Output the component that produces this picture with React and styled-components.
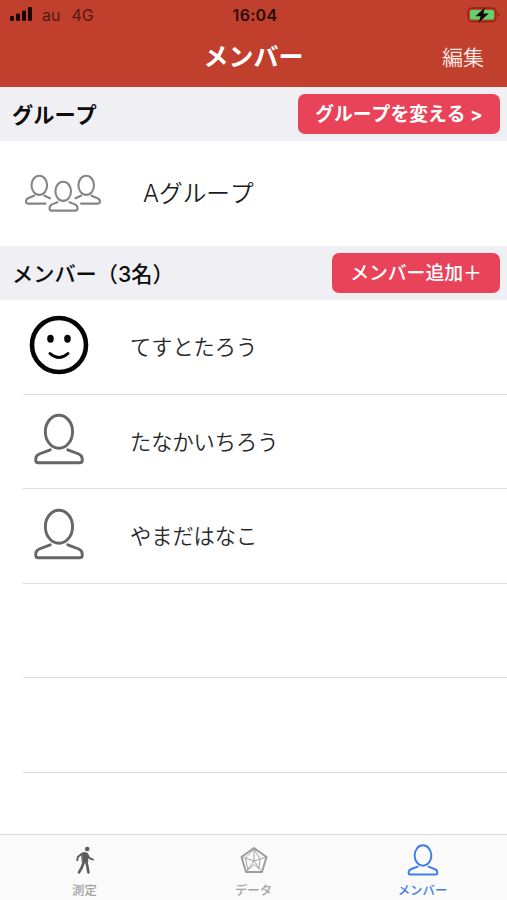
import React from 'react';
import styled, { createGlobalStyle } from 'styled-components';

const GlobalStyle = createGlobalStyle`
  * { box-sizing: border-box; }
  body {
    margin: 0;
    background: #fff;
    font-family: Inter, "Noto Sans CJK JP", sans-serif;
    font-kerning: none;
  }
  button { font: inherit; border: 0; background: none; padding: 0; }
  svg { display: block; flex: none; }
`;

const Screen = styled.div`
  width: 507px;
  height: 900px;
  display: flex;
  flex-direction: column;
  overflow: hidden;
  background: #fff;
`;

const Header = styled.header`
  height: 87px;
  flex: none;
  background: #c1402d;
`;

const StatusBar = styled.div`
  height: 30px;
  display: grid;
  grid-template-columns: 1fr auto 1fr;
  align-items: center;
  padding: 0 7px 0 10px;
  color: #2a0d08;
  font-size: 16px;
  line-height: 30px;
`;

const Carrier = styled.div`
  display: flex;
  align-items: center;
  color: #521a11;
  svg { margin-bottom: 2px; }
  span { margin-left: 9px; }
  span + span { margin-left: 11px; }
`;

const Clock = styled.div`
  font-weight: 600;
  font-size: 16px;
  letter-spacing: 0.3px;
`;

const Battery = styled.div`
  justify-self: end;
  padding-bottom: 1px;
`;

const NavBar = styled.div`
  height: 53px;
  display: grid;
  grid-template-columns: 1fr auto 1fr;
  align-items: center;
  padding: 0 23px;
  color: #fff;
`;

const NavTitle = styled.h1`
  grid-column: 2;
  margin: 0;
  font-size: 25px;
  line-height: 36px;
  font-weight: 700;
`;

const EditButton = styled.button`
  justify-self: end;
  color: #fde9e5;
  font-size: 21px;
  line-height: 32px;
  font-weight: 350;
  padding-top: 3px;
`;

const SectionHeader = styled.div`
  height: ${(p) => p.$height}px;
  flex: none;
  display: flex;
  align-items: center;
  justify-content: space-between;
  padding: 0 7px 0 12px;
  background: #f0eff4;
`;

const SectionTitle = styled.h2`
  margin: 0;
  padding-top: 1px;
  color: #0c0c0d;
  font-size: 21.2px;
  line-height: 32px;
  font-weight: ${(p) => p.$weight};
  white-space: nowrap;
`;

const ActionButton = styled.button`
  width: ${(p) => p.$width}px;
  height: 40px;
  padding-top: 2px;
  border-radius: 7px;
  background: #e9435a;
  color: #fff;
  font-size: 18.8px;
  line-height: 38px;
  font-weight: ${(p) => p.$weight};
  white-space: nowrap;
`;

const GroupRow = styled.div`
  height: 105px;
  flex: none;
  display: flex;
  align-items: center;
  padding-left: 24px;
  gap: 41px;
  color: #1c1c1e;
  font-size: 23.7px;
  line-height: 36px;
  font-weight: 350;
  svg { margin-bottom: 2px; }
  span { padding-top: 1px; }
`;

const MemberList = styled.ul`
  flex: 1;
  margin: 0;
  padding: 0 0 0 23px;
  list-style: none;
`;

const MemberRow = styled.li`
  height: 94.5px;
  display: flex;
  align-items: center;
  border-bottom: 1px solid #dcdcde;
  color: #28282a;
  font-size: 21.2px;
  line-height: 32px;
  font-weight: 350;
  span { padding-top: 1px; }
`;

const Avatar = styled.div`
  width: 72px;
  height: 60px;
  flex: none;
  display: flex;
  align-items: center;
  justify-content: center;
  margin: 0 35px 4px 0;
`;

const TabBar = styled.nav`
  height: 66px;
  flex: none;
  display: grid;
  grid-template-columns: repeat(3, 1fr);
  border-top: 1px solid #dcdcdc;
  background: #fafafa;
`;

const Tab = styled.button`
  display: flex;
  flex-direction: column;
  align-items: center;
  padding-top: 8px;
  color: ${(p) => (p.$active ? '#3d7fe6' : '#a3a3a3')};
  font-size: 12.4px;
  line-height: 18px;
  font-weight: 500;
`;

const TabIcon = styled.div`
  height: 34px;
  display: flex;
  align-items: center;
  justify-content: center;
  margin-bottom: 5px;
`;

const SignalIcon = () => (
  <svg width="23" height="16" viewBox="0 0 23 16" fill="#1a0603">
    <rect x="0" y="10" width="4" height="5" rx="1.2" />
    <rect x="6" y="7.5" width="4" height="7.5" rx="1.2" />
    <rect x="12" y="4.5" width="4" height="10.5" rx="1.2" />
    <rect x="18" y="1" width="4" height="14" rx="1.2" />
  </svg>
);

const BatteryIcon = () => (
  <svg width="33" height="18" viewBox="0 0 33 18">
    <rect x="1" y="2" width="28" height="13.5" rx="4" fill="none" stroke="#8c2416" strokeWidth="1.4" />
    <rect x="3" y="4" width="24" height="9.5" rx="1.6" fill="#62d06b" />
    <path d="M31 6.8v4q1.6-.6 1.6-2t-1.6-2Z" fill="#8c2416" />
    <path d="M17.8 1.5 8.5 10.2h5.2L11.6 16.8 21.8 7.6h-5.4Z" fill="#120503" />
  </svg>
);

const PersonIcon = ({ size = 52, color = '#666', stroke = 2.9 }) => (
  <svg width={size} height={size} viewBox="0 0 50.5 52" fill="none" stroke={color} strokeWidth={stroke} strokeLinecap="round" strokeLinejoin="round">
    <ellipse cx="25.2" cy="18.7" rx="13.6" ry="16.5" />
    <path d="M16.5 36.8 5.5 41Q2 42.6 2 46v1.2q0 2.5 2.5 2.5h41.5q2.5 0 2.5-2.5V46q0-3.4-3.5-5L34 36.8" />
  </svg>
);

const GroupIcon = () => (
  <svg width="78" height="40" viewBox="0 0 78 40" fill="none" stroke="#858585" strokeWidth="2.1" strokeLinecap="round" strokeLinejoin="round">
    <ellipse cx="15.3" cy="12.3" rx="7.8" ry="9.6" />
    <ellipse cx="39.2" cy="18.3" rx="7.8" ry="9.6" />
    <ellipse cx="62.2" cy="12.3" rx="7.8" ry="9.6" />
    <path d="M10 22.7 4.5 25Q2 26.2 2 28.6q0 2 2 2h17.5M20.5 22.7l5.5 2.6" />
    <path d="M33.5 29.2 28 31.4q-2.5 1.2-2.5 3.8 0 2.4 2 2.4h24q2 0 2-2.4 0-2.6-2.5-3.8l-5.5-2.2" />
    <path d="M57 22.7l-5.5 2.6M67.5 22.7 73.5 25.2Q76 26.3 76 28.6q0 2-2 2H57" />
  </svg>
);

const SmileIcon = () => (
  <svg width="60" height="60" viewBox="0 0 60 60" fill="none">
    <circle cx="30" cy="30" r="27" stroke="#050505" strokeWidth="4.6" />
    <ellipse cx="21.5" cy="23.7" rx="3.3" ry="4" fill="#050505" />
    <ellipse cx="38.5" cy="23.7" rx="3.3" ry="4" fill="#050505" />
    <path d="M21 38.5q9 8 18 0" stroke="#050505" strokeWidth="3" strokeLinecap="round" />
  </svg>
);

const WalkIcon = () => (
  <svg width="20" height="30" viewBox="0 0 20 30" fill="none" stroke="#5c5c5c" strokeLinecap="round" strokeLinejoin="round">
    <circle cx="12.2" cy="4" r="2.3" fill="#5c5c5c" stroke="none" />
    <path d="M7 8.2q3-1.6 5.2.2l.6 8.4-5.2.2Z" fill="#5c5c5c" strokeWidth="1" />
    <path d="M7 8.8 3 11.8 2.2 15.3" strokeWidth="1.9" />
    <path d="M12 8.8 14.2 13 18 14.6" strokeWidth="1.9" />
    <path d="M8.8 17 6.8 22.5 4 27.4" strokeWidth="2.6" />
    <path d="M11.2 16.5 12.4 21.5 13.4 27.4" strokeWidth="2.6" />
  </svg>
);

const RadarIcon = () => (
  <svg width="28" height="28" viewBox="0 0 28 28" fill="none" stroke="#9c9c9c" strokeLinejoin="round">
    <path d="M14 2 26.5 11 22 26H6L1.5 11Z" strokeWidth="1.9" />
    <path d="M14 2v13M26.5 11 14 15 1.5 11M6 26l8-11 8 11" strokeWidth="0.9" />
    <path d="M14 3 20 13 19 22.5 14 18.5 7.8 24 5.5 12Z" strokeWidth="0.9" />
  </svg>
);

const members = [
  { name: 'てすとたろう', smile: true },
  { name: 'たなかいちろう' },
  { name: 'やまだはなこ' },
  {},
  {},
];

export default function App() {
  return (
    <Screen>
      <GlobalStyle />
      <Header>
        <StatusBar>
          <Carrier>
            <SignalIcon />
            <span>au</span>
            <span>4G</span>
          </Carrier>
          <Clock>16:04</Clock>
          <Battery><BatteryIcon /></Battery>
        </StatusBar>
        <NavBar>
          <NavTitle>メンバー</NavTitle>
          <EditButton>編集</EditButton>
        </NavBar>
      </Header>
      <SectionHeader $height={54}>
        <SectionTitle $weight={700}>グループ</SectionTitle>
        <ActionButton $width={202} $weight={700}>グループを変える &gt;</ActionButton>
      </SectionHeader>
      <GroupRow>
        <GroupIcon />
        <span>Aグループ</span>
      </GroupRow>
      <SectionHeader $height={54}>
        <SectionTitle $weight={500}>メンバー（3名）</SectionTitle>
        <ActionButton $width={168} $weight={500}>メンバー追加＋</ActionButton>
      </SectionHeader>
      <MemberList>
        {members.map((m, i) => (
          <MemberRow key={i}>
            {m.name && <Avatar>{m.smile ? <SmileIcon /> : <PersonIcon />}</Avatar>}
            <span>{m.name}</span>
          </MemberRow>
        ))}
      </MemberList>
      <TabBar>
        <Tab>
          <TabIcon><WalkIcon /></TabIcon>
          測定
        </Tab>
        <Tab>
          <TabIcon><RadarIcon /></TabIcon>
          データ
        </Tab>
        <Tab $active>
          <TabIcon><PersonIcon size={32} color="#3d7fe6" stroke={3.2} /></TabIcon>
          メンバー
        </Tab>
      </TabBar>
    </Screen>
  );
}
